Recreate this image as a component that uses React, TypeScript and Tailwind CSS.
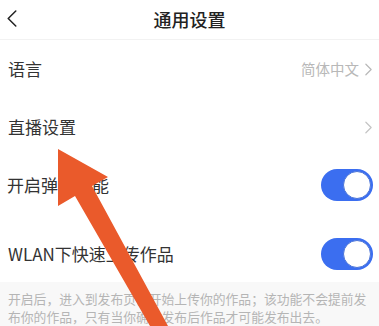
import React from 'react';

const font = { fontFamily: '"Noto Sans CJK SC", "Noto Sans", sans-serif' };

const Chevron = ({ className }: { className?: string }) => (
  <svg viewBox="0 0 8 14" className={className} fill="none" stroke="currentColor" strokeWidth={1.4} strokeLinecap="round" strokeLinejoin="round">
    <path d="M1 1l6 6-6 6" />
  </svg>
);

const Toggle = () => (
  <div className="w-[52px] h-[32px] rounded-full bg-[#3b6ef0] p-[2px] flex justify-end">
    <div className="w-[28px] h-[28px] rounded-full bg-white border border-[#4a74d8]" />
  </div>
);

const Row = ({ label, right }: { label: string; right: React.ReactNode }) => (
  <div className="h-[58px] flex items-center justify-between pl-2 pr-[7px]">
    <span className="text-[17px] text-[#333]">{label}</span>
    {right}
  </div>
);

export default function App() {
  return (
    <div className="relative w-[379px] h-[326px] bg-white overflow-hidden" style={font}>
      <div className="h-[40px] flex items-center relative border-b border-[#f2f2f2]">
        <svg viewBox="0 0 10 18" className="absolute left-[7px] top-[10px] w-[10px] h-[17px] text-[#222]" fill="none" stroke="currentColor" strokeWidth={1.6} strokeLinecap="round" strokeLinejoin="round">
          <path d="M9 1L1 9l8 8" />
        </svg>
        <div className="flex-1 text-center text-[18px] text-[#222] font-medium">通用设置</div>
      </div>
      <Row
        label="语言"
        right={
          <div className="flex items-center gap-[6px] text-[#b8b8b8]">
            <span className="text-[14.5px]">简体中文</span>
            <Chevron className="w-[7px] h-[13px]" />
          </div>
        }
      />
      <Row label="直播设置" right={<Chevron className="w-[7px] h-[13px] text-[#c4c4c4]" />} />
      <div className="h-[58px] flex items-center justify-between pl-[7px] pr-[6px]">
        <span className="text-[17px] text-[#333]">开启弹幕功能</span>
        <Toggle />
      </div>
      <div className="h-[12px]" />
      <div className="h-[56px] flex items-center justify-between pl-2 pr-[6px]">
        <span className="text-[17px] text-[#333]">WLAN下快速上传作品</span>
        <Toggle />
      </div>
      <div className="bg-[#f8f8f8] px-2 pt-[8px] pb-2 text-[12.8px] leading-[18px] text-[#b5b5b5]">
        开启后，进入到发布页会开始上传你的作品；该功能不会提前发布你的作品，只有当你确认发布后作品才可能发布出去。
      </div>
      <svg className="absolute left-0 top-0 w-[379px] h-[326px] pointer-events-none" viewBox="0 0 379 326">
        <polygon points="58,149 108,177 92,186 168,326 150,326 75,196 58,206" fill="#ea5a2b" />
      </svg>
    </div>
  );
}
